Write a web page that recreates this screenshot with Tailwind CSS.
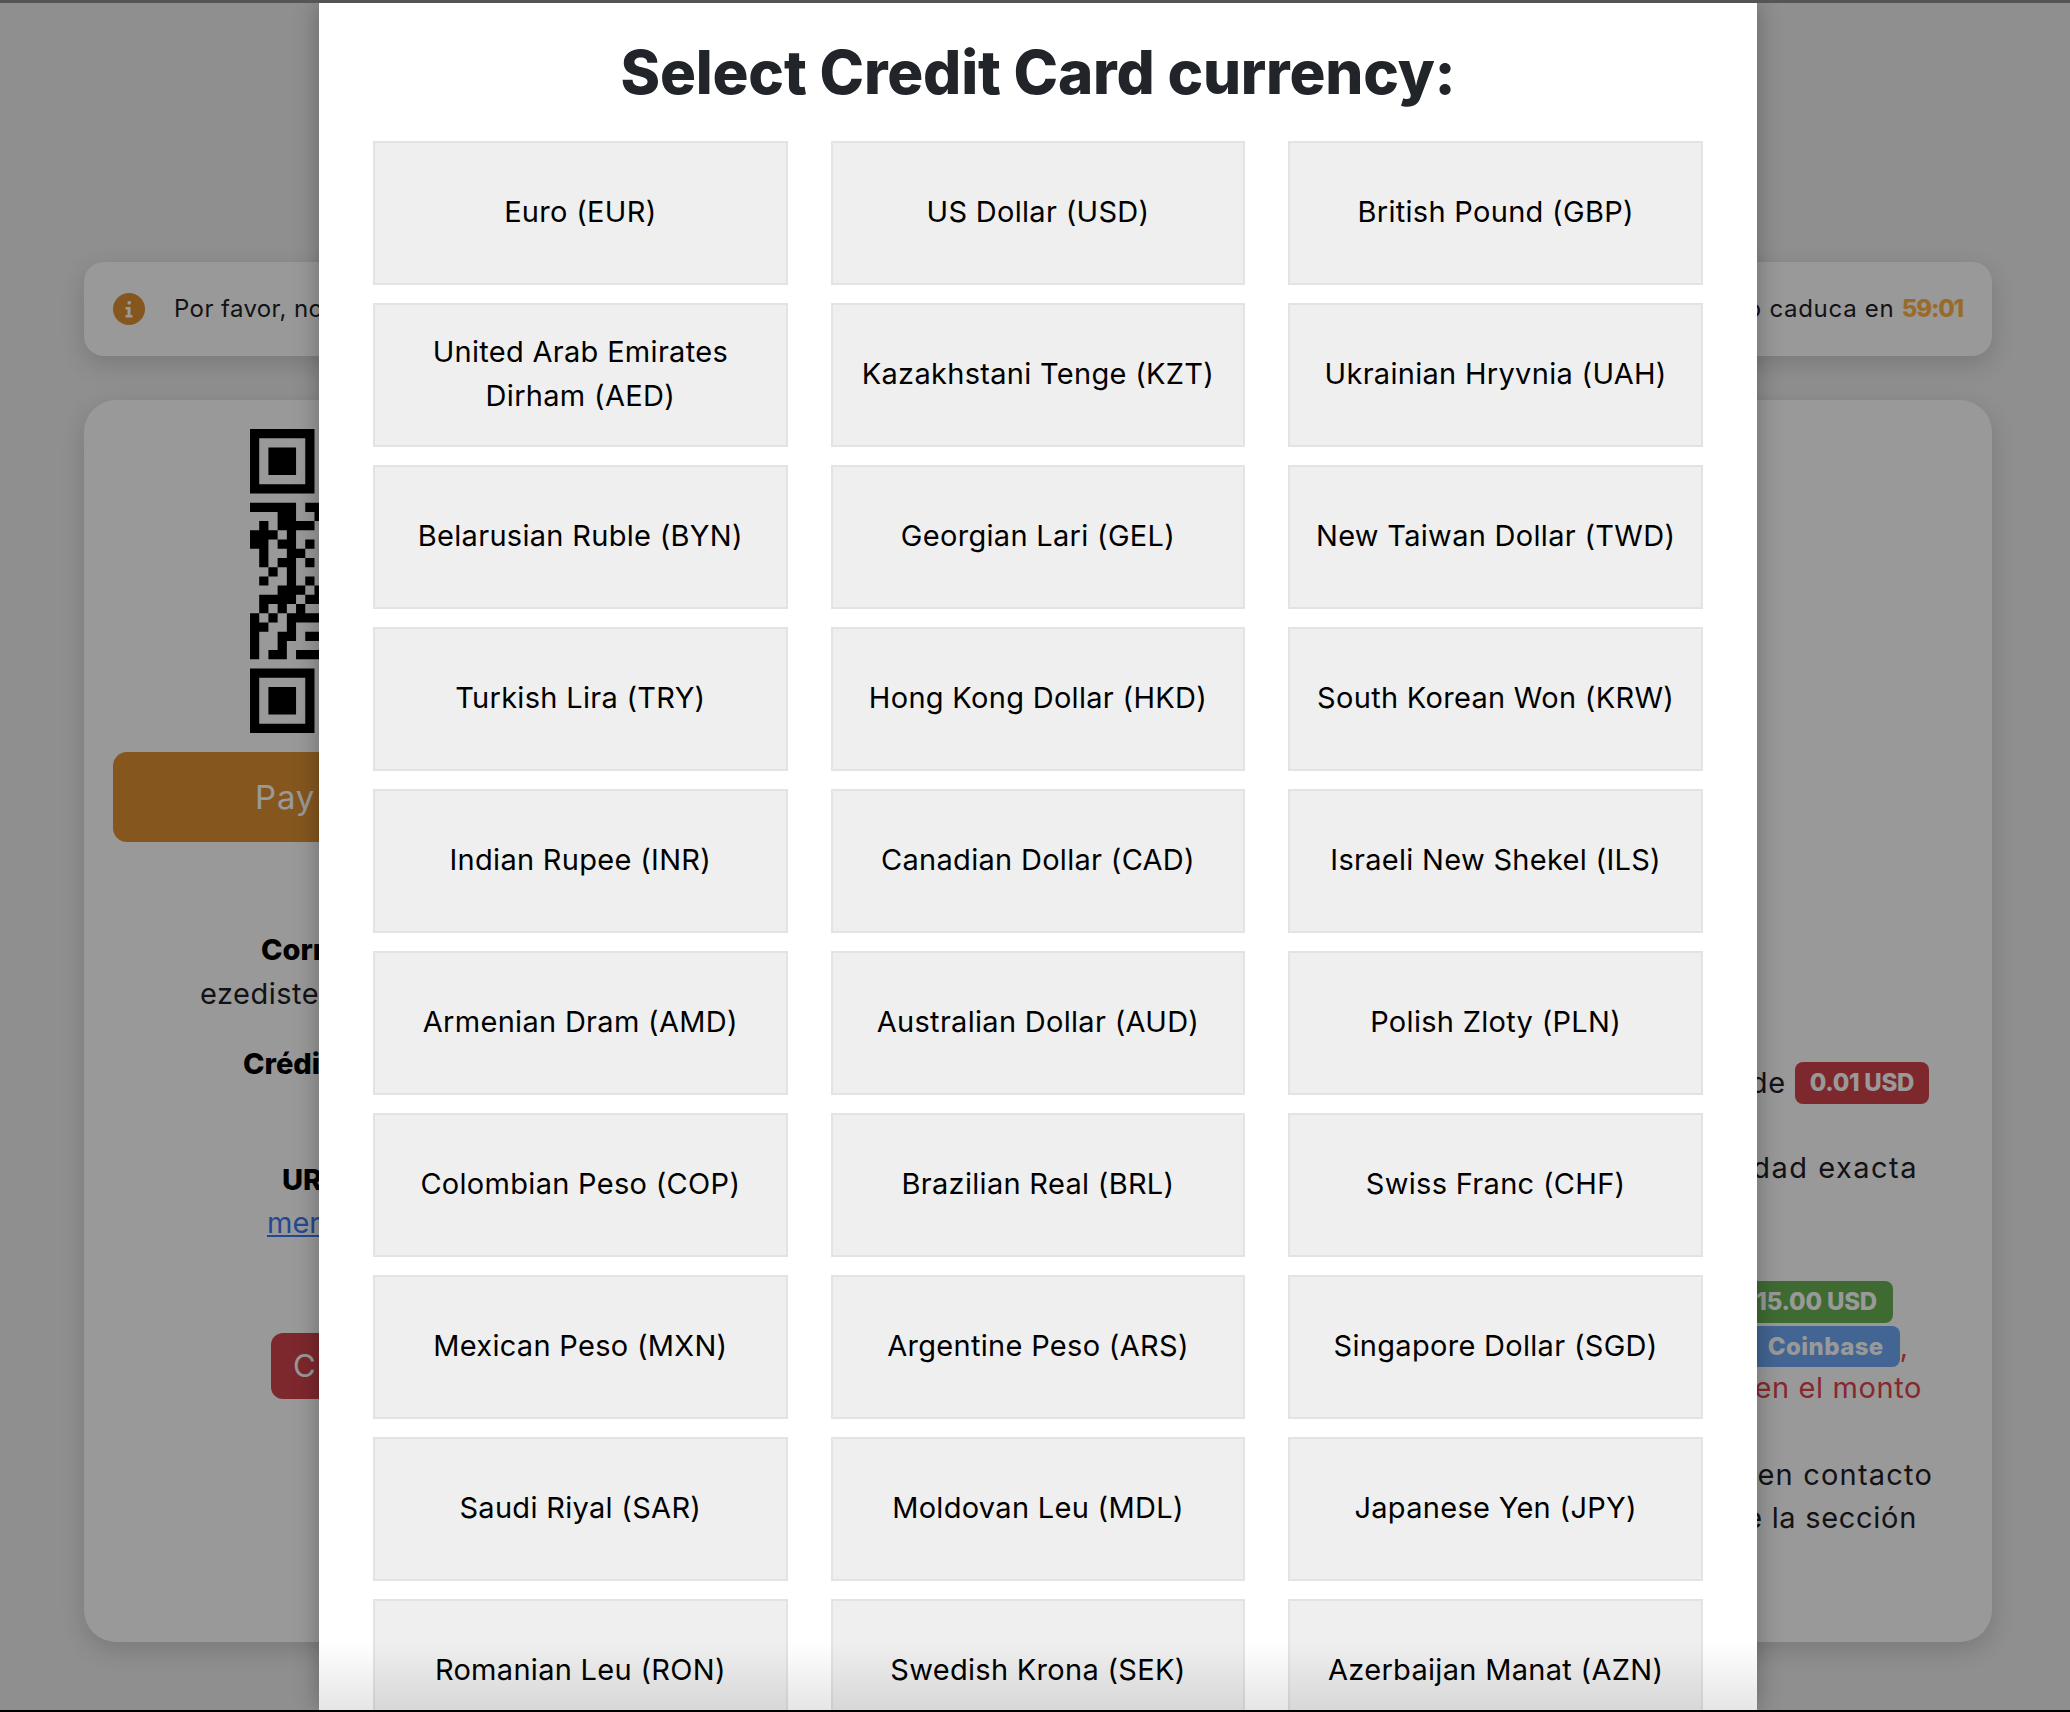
<!DOCTYPE html>
<html lang="es">
  <head>
    <meta charset="UTF-8" />
    <title>Select Credit Card currency</title>
    <script src="https://cdn.jsdelivr.net/npm/@tailwindcss/browser@4"></script>
  </head>
  <body class="relative w-[2070px] h-[1712px] overflow-hidden bg-[#eeeeee] font-[Inter] text-[#1f2126]">
    <!-- Page behind the dialog -->
    <main class="pt-[262px] pl-[84px] w-[1992px]">
      <!-- Notice -->
      <div class="flex items-center h-[94px] pl-[29px] pr-[29px] bg-white rounded-[20px] shadow-[0_8px_24px_rgba(0,0,0,0.15)] text-[24px] whitespace-nowrap">
        <svg class="w-[32px] h-[32px]" viewBox="0 0 32 32">
          <circle cx="16" cy="16" r="16" fill="#de9134" />
          <rect x="14.5" y="8" width="3.500" height="3.500" rx="1.500" fill="#ffffff" />
          <path d="M12.500 14h5v8h2v2.500h-7V22h2v-5.500h-2z" fill="#ffffff" />
        </svg>
        <span class="ml-[29px] tracking-[0.4px]">Por favor, no</span>
        <span class="ml-auto tracking-[0.7px]">pago caduca en <b class="font-extrabold text-[#ffb347] tracking-[-1.2px]">59:01</b></span>
      </div>

      <!-- Payment card -->
      <section class="flex h-[1242px] mt-[44px] bg-white rounded-[32px] shadow-[0_8px_24px_rgba(0,0,0,0.15)] text-[29px] leading-[44px]">
        <div class="w-[578px] ml-[29px] pt-[29px] whitespace-nowrap">
          <svg class="ml-[137px] w-[304px] h-[304px]" viewBox="0 0 33 33" fill="#000000">
            <path fill-rule="evenodd" d="M0 0h7v7H0zM1 1v5h5V1zM2 2h3v3H2zM0 26h7v7H0zM1 27v5h5v-5zM2 28h3v3H2z" />
            <path d="M0 8h5v1H0zM6 8h2v1H6zM3 9h2v1H3zM7 9h1v1H7zM1 10h1v1H1zM3 10h4v1H3zM0 11h3v1H0zM4 11h1v1H4zM0 12h2v1H0zM3 12h2v1H3zM6 12h1v1H6zM1 13h1v1H1zM4 13h2v1H4zM1 14h1v1H1zM3 14h2v1H3zM6 14h1v1H6zM2 15h1v1H2zM4 15h1v1H4zM1 16h1v1H1zM4 16h1v1H4zM6 16h1v1H6zM3 17h3v1H3zM7 17h1v1H7zM1 18h4v1H1zM6 18h2v1H6zM1 19h1v1H1zM3 19h1v1H3zM5 19h1v1H5zM0 20h1v1H0zM2 20h1v1H2zM4 20h4v1H4zM0 21h2v1H0zM4 21h1v1H4zM0 22h1v1H0zM3 22h2v1H3zM6 22h2v1H6zM0 23h1v1H0zM3 23h1v1H3zM0 24h1v1H0zM2 24h2v1H2zM5 24h3v1H5z" />
          </svg>
          <button class="block w-full h-[90px] mt-[19px] pl-[142px] text-left text-[33px] tracking-[0.8px] text-white bg-[#de9134] rounded-[14px]">Pay with</button>
          <p class="mt-[86px] pl-[148px] font-extrabold text-black">Correo</p>
          <p class="pl-[87px] tracking-[0.5px]">ezedistefano</p>
          <p class="mt-[26px] pl-[130px] font-extrabold text-black">Crédito</p>
          <p class="mt-[72px] pl-[169px] font-extrabold text-black">URL</p>
          <a class="block -mt-[1px] pl-[154px] text-[#3f7af0] underline">merchant</a>
          <button class="block w-[262px] h-[66px] mt-[88px] ml-[158px] pl-[22px] text-left text-[31px] tracking-[3px] text-white bg-[#d1444b] rounded-[12px]">Cancelar</button>
        </div>

        <div class="ml-auto w-[235px] pt-[662px] whitespace-nowrap">
          <div class="flex justify-end items-center h-[42px] pr-[63px]">
            <span class="tracking-[0.6px]">de</span>
            <span class="ml-[9px] px-[15px] h-[42px] leading-[42px] text-[24px] font-extrabold tracking-[-0.3px] text-white bg-[#d1444b] rounded-[8px]">0.01 USD</span>
          </div>
          <p class="flex justify-end mt-[42px] pr-[74px] tracking-[1.5px]">cantidad exacta</p>
          <div class="flex justify-end mt-[91px] pr-[99px]">
            <span class="pl-[16px] pr-[16px] h-[42px] leading-[42px] text-[24px] font-extrabold tracking-[-0.2px] text-white bg-[#69b255] rounded-[8px]">15.00 USD</span>
          </div>
          <div class="flex justify-end items-end mt-[3px] pr-[84px] text-[#e0444c]">
            <span class="pl-[40px] pr-[16px] h-[41px] leading-[41px] text-[24px] font-extrabold tracking-[0.4px] text-white bg-[#71a8f5] rounded-[8px]">Coinbase</span>
            <span class="h-[41px] leading-[41px]">,</span>
          </div>
          <p class="flex justify-end -mt-[1px] pr-[70px] text-[#e0444c] tracking-[0.6px]">en el monto</p>
          <p class="flex justify-end mt-[43px] pr-[59px] tracking-[1.2px]">en contacto</p>
          <p class="flex justify-end -mt-[1px] pr-[75px] tracking-[0.7px]">de la sección</p>
        </div>
      </section>
    </main>

    <!-- Backdrop -->
    <div class="absolute inset-0 bg-black/40"></div>

    <!-- Dialog -->
    <div class="absolute top-[3px] left-[319px] w-[1438px] h-[1707px] overflow-hidden bg-white px-[54px] shadow-[0_0_24px_rgba(0,0,0,0.3)]">
      <h1 class="h-[138px] pt-[31px] text-center text-[60px] leading-[76px] font-extrabold text-[#212529] tracking-[-0.2px]">Select Credit Card currency:</h1>
      <div class="grid grid-cols-3 gap-x-[43px] gap-y-[18px] text-[29px] leading-[44px] text-black tracking-[0.3px]">
        <button class="h-[144px] px-[16px] pb-[2px] bg-[#efefef] border-2 border-[#e3e3e3]">Euro (EUR)</button>
        <button class="h-[144px] px-[16px] pb-[2px] bg-[#efefef] border-2 border-[#e3e3e3]">US Dollar (USD)</button>
        <button class="h-[144px] px-[16px] pb-[2px] bg-[#efefef] border-2 border-[#e3e3e3]">British Pound (GBP)</button>
        <button class="h-[144px] px-[16px] pb-[2px] bg-[#efefef] border-2 border-[#e3e3e3]">United Arab Emirates Dirham (AED)</button>
        <button class="h-[144px] px-[16px] pb-[2px] bg-[#efefef] border-2 border-[#e3e3e3]">Kazakhstani Tenge (KZT)</button>
        <button class="h-[144px] px-[16px] pb-[2px] bg-[#efefef] border-2 border-[#e3e3e3]">Ukrainian Hryvnia (UAH)</button>
        <button class="h-[144px] px-[16px] pb-[2px] bg-[#efefef] border-2 border-[#e3e3e3]">Belarusian Ruble (BYN)</button>
        <button class="h-[144px] px-[16px] pb-[2px] bg-[#efefef] border-2 border-[#e3e3e3]">Georgian Lari (GEL)</button>
        <button class="h-[144px] px-[16px] pb-[2px] bg-[#efefef] border-2 border-[#e3e3e3]">New Taiwan Dollar (TWD)</button>
        <button class="h-[144px] px-[16px] pb-[2px] bg-[#efefef] border-2 border-[#e3e3e3]">Turkish Lira (TRY)</button>
        <button class="h-[144px] px-[16px] pb-[2px] bg-[#efefef] border-2 border-[#e3e3e3]">Hong Kong Dollar (HKD)</button>
        <button class="h-[144px] px-[16px] pb-[2px] bg-[#efefef] border-2 border-[#e3e3e3]">South Korean Won (KRW)</button>
        <button class="h-[144px] px-[16px] pb-[2px] bg-[#efefef] border-2 border-[#e3e3e3]">Indian Rupee (INR)</button>
        <button class="h-[144px] px-[16px] pb-[2px] bg-[#efefef] border-2 border-[#e3e3e3]">Canadian Dollar (CAD)</button>
        <button class="h-[144px] px-[16px] pb-[2px] bg-[#efefef] border-2 border-[#e3e3e3]">Israeli New Shekel (ILS)</button>
        <button class="h-[144px] px-[16px] pb-[2px] bg-[#efefef] border-2 border-[#e3e3e3]">Armenian Dram (AMD)</button>
        <button class="h-[144px] px-[16px] pb-[2px] bg-[#efefef] border-2 border-[#e3e3e3]">Australian Dollar (AUD)</button>
        <button class="h-[144px] px-[16px] pb-[2px] bg-[#efefef] border-2 border-[#e3e3e3]">Polish Zloty (PLN)</button>
        <button class="h-[144px] px-[16px] pb-[2px] bg-[#efefef] border-2 border-[#e3e3e3]">Colombian Peso (COP)</button>
        <button class="h-[144px] px-[16px] pb-[2px] bg-[#efefef] border-2 border-[#e3e3e3]">Brazilian Real (BRL)</button>
        <button class="h-[144px] px-[16px] pb-[2px] bg-[#efefef] border-2 border-[#e3e3e3]">Swiss Franc (CHF)</button>
        <button class="h-[144px] px-[16px] pb-[2px] bg-[#efefef] border-2 border-[#e3e3e3]">Mexican Peso (MXN)</button>
        <button class="h-[144px] px-[16px] pb-[2px] bg-[#efefef] border-2 border-[#e3e3e3]">Argentine Peso (ARS)</button>
        <button class="h-[144px] px-[16px] pb-[2px] bg-[#efefef] border-2 border-[#e3e3e3]">Singapore Dollar (SGD)</button>
        <button class="h-[144px] px-[16px] pb-[2px] bg-[#efefef] border-2 border-[#e3e3e3]">Saudi Riyal (SAR)</button>
        <button class="h-[144px] px-[16px] pb-[2px] bg-[#efefef] border-2 border-[#e3e3e3]">Moldovan Leu (MDL)</button>
        <button class="h-[144px] px-[16px] pb-[2px] bg-[#efefef] border-2 border-[#e3e3e3]">Japanese Yen (JPY)</button>
        <button class="h-[144px] px-[16px] pb-[2px] bg-[#efefef] border-2 border-[#e3e3e3]">Romanian Leu (RON)</button>
        <button class="h-[144px] px-[16px] pb-[2px] bg-[#efefef] border-2 border-[#e3e3e3]">Swedish Krona (SEK)</button>
        <button class="h-[144px] px-[16px] pb-[2px] bg-[#efefef] border-2 border-[#e3e3e3]">Azerbaijan Manat (AZN)</button>
      </div>
      <!-- Scroll fade at the bottom of the dialog -->
      <div class="absolute left-0 right-0 bottom-0 h-[68px] bg-gradient-to-b from-transparent to-black/10"></div>
    </div>

    <!-- Window edges -->
    <div class="absolute top-0 left-0 right-0 h-[3px] bg-[#555555]"></div>
    <div class="absolute bottom-0 left-0 right-0 h-[2px] bg-black"></div>
  </body>
</html>
